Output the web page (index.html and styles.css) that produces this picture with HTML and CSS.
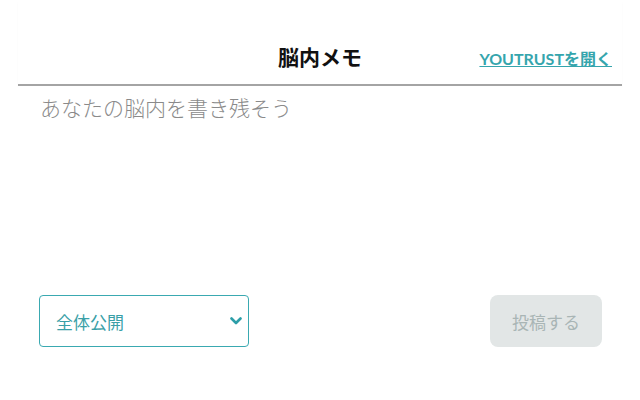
FILE: index.html
```html
<!DOCTYPE html>
<html lang="ja">
<head>
    <meta charset="UTF-8">
    <meta name="viewport" content="width=device-width, initial-scale=1.0">
    <title>脳内メモ</title>
    <link rel="stylesheet" href="styles.css">
</head>
<body>

    <div class="memo">
        <header class="memo-header">
            <span></span>
            <h1>脳内メモ</h1>
            <a href="#" class="open-link">YOUTRUSTを開く</a>
        </header>

        <textarea class="memo-text" placeholder="あなたの脳内を書き残そう"></textarea>

        <div class="memo-footer">
            <div class="select-wrap">
                <select class="scope">
                    <option>全体公開</option>
                    <option>つながりのみ</option>
                </select>
                <svg class="chevron" width="12" height="8" viewBox="0 0 12 8">
                    <path d="M1.5 1.5 L6 6 L10.5 1.5" fill="none" stroke="#2c9ea8" stroke-width="2.6" stroke-linecap="round" stroke-linejoin="round"/>
                </svg>
            </div>
            <button type="button" class="post-btn" disabled>投稿する</button>
        </div>
    </div>

</body>
</html>
```

FILE: styles.css
```css
body {
    margin: 0;
    font-family: "Lato", "Noto Sans CJK JP", sans-serif;
    background-color: #ffffff;
}

.memo {
    padding: 0 18px;
}

.memo-header {
    display: grid;
    grid-template-columns: 1fr auto 1fr;
    align-items: center;
    height: 84px;
    border-bottom: 2px solid #a4a4a4;
    box-shadow: 0 2px 2px -1px rgba(0, 0, 0, 0.15);
}

.memo-header h1 {
    margin: 0;
    padding-top: 28px;
    font-size: 21px;
    font-weight: bold;
    color: #111;
}

.open-link {
    justify-self: end;
    margin-right: 10px;
    padding-top: 32px;
    font-size: 16px;
    font-weight: bold;
    color: #35a5ad;
    text-decoration: underline;
}

.memo-text {
    display: block;
    width: 100%;
    box-sizing: border-box;
    height: 202px;
    padding: 6px 22px 10px;
    border: none;
    outline: none;
    resize: none;
    font-family: "Noto Sans CJK JP", sans-serif;
    font-size: 21px;
    font-weight: 300;
    color: #333;
}

.memo-text::placeholder {
    color: #8a8a8a;
}

.memo-footer {
    display: flex;
    justify-content: space-between;
    align-items: center;
    padding: 7px 20px 0 21px;
}

.select-wrap {
    position: relative;
    width: 210px;
}

.scope {
    width: 100%;
    height: 52px;
    padding: 0 16px;
    border: 1px solid #3aa9b1;
    border-radius: 4px;
    background-color: #fff;
    appearance: none;
    font-family: "Noto Sans CJK JP", sans-serif;
    font-size: 17px;
    color: #3a9fa7;
}

.chevron {
    position: absolute;
    right: 7px;
    top: 22px;
}

.post-btn {
    width: 112px;
    height: 52px;
    border: none;
    border-radius: 8px;
    background-color: #e2e6e6;
    font-family: "Noto Sans CJK JP", sans-serif;
    font-size: 17px;
    color: #a9b5b5;
}
```
